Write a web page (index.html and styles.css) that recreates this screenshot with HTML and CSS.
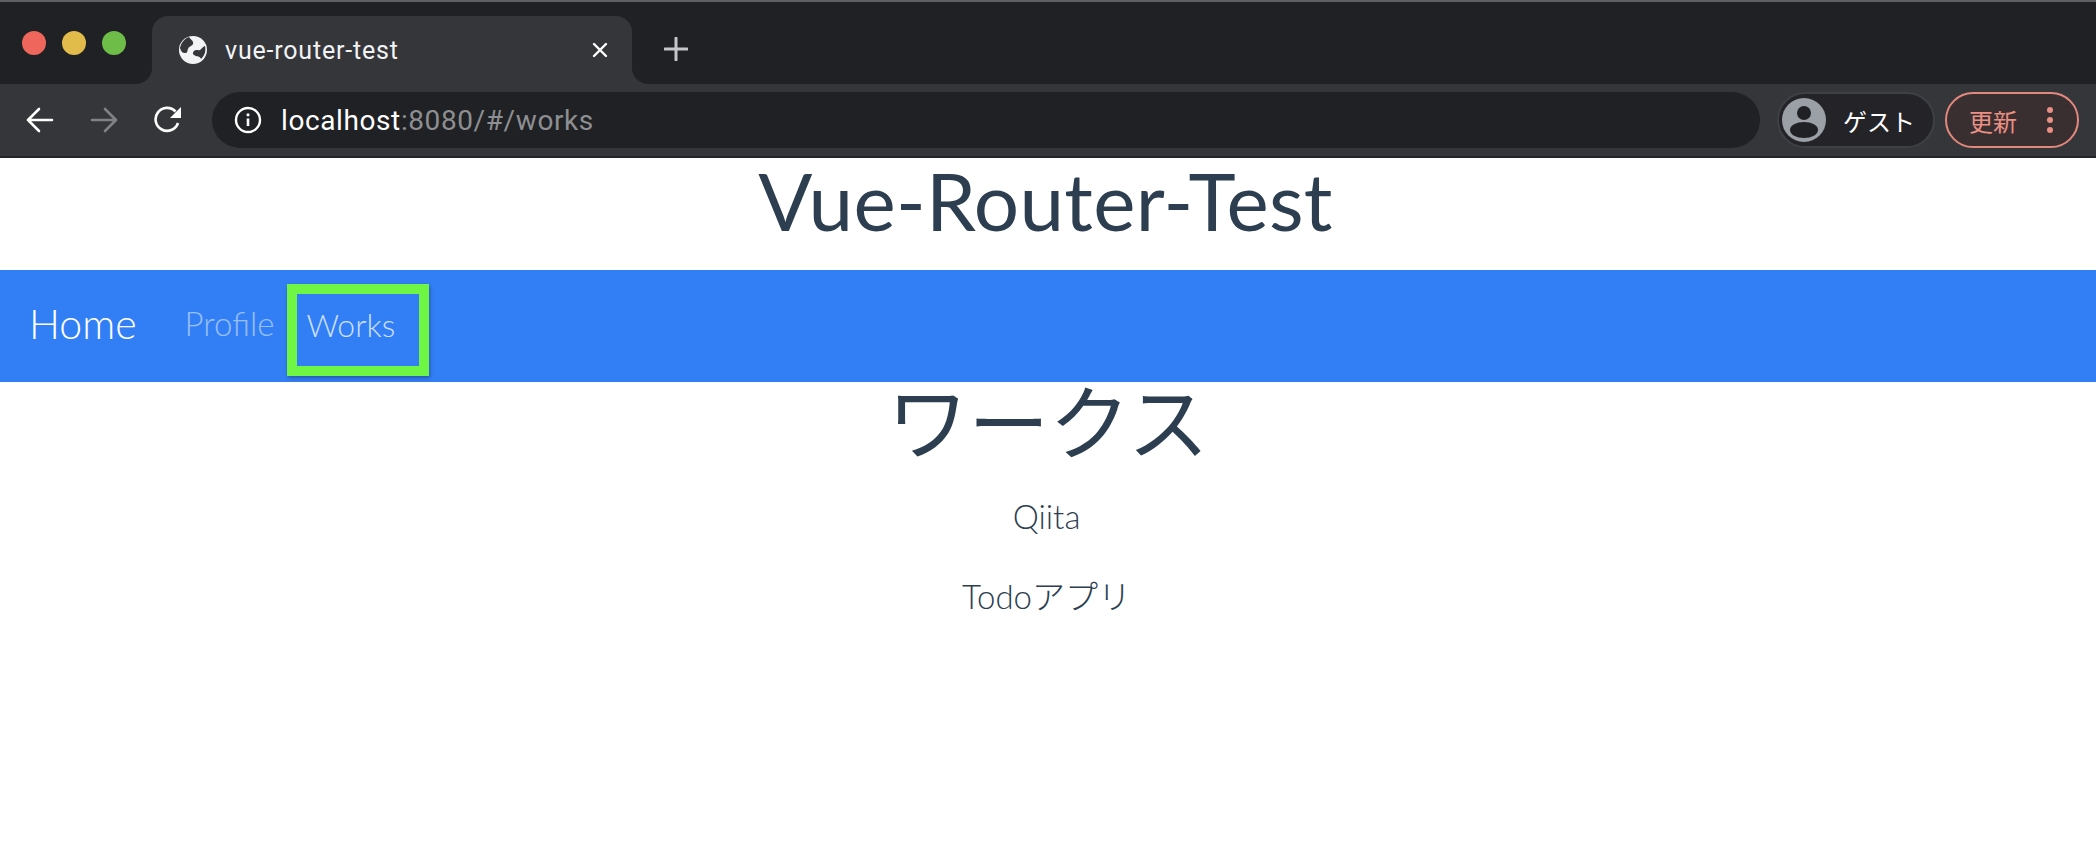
FILE: index.html
```html
<!DOCTYPE html>
<html lang="ja">
<head>
    <meta charset="UTF-8">
    <title>vue-router-test</title>
    <link rel="stylesheet" href="styles.css">
</head>
<body>

    <div class="browser">
        <div class="tabstrip">
            <div class="lights">
                <span class="light red"></span>
                <span class="light yellow"></span>
                <span class="light green"></span>
            </div>
            <div class="tab">
                <svg class="favicon" width="30" height="30" viewBox="0 0 30 30">
                    <circle cx="15" cy="15" r="14" fill="#f1f3f4"/>
                    <path d="M11 2 C13 5 16 6 15 9 C14 11 11 11 10 14 C9 16 10 18 7 18 C4 18 3 16 2 13 C3 8 6 4 11 2Z" fill="#35363a"/>
                    <path d="M16 16 C18 14 20 16 22 15 C24 14 24 12 27 11 C28 16 27 20 23 24 C22 21 20 22 18 21 C15 20 14 18 16 16Z" fill="#35363a"/>
                </svg>
                <span class="tab-title">vue-router-test</span>
                <svg class="tab-close" width="16" height="16" viewBox="0 0 16 16">
                    <path d="M2 2 L14 14 M14 2 L2 14" stroke="#fff" stroke-width="2.4" stroke-linecap="round"/>
                </svg>
            </div>
            <div class="tab-rest">
                <svg width="24" height="24" viewBox="0 0 24 24">
                    <path d="M12 1 V23 M1 12 H23" stroke="#c4c7c9" stroke-width="3" stroke-linecap="round"/>
                </svg>
            </div>
        </div>
        <div class="toolbar">
            <svg class="nav-icon" width="28" height="28" viewBox="0 0 28 28">
                <path d="M26 14 H2 M13 3 L2 14 L13 25" fill="none" stroke="#fff" stroke-width="2.6" stroke-linecap="round" stroke-linejoin="round"/>
            </svg>
            <svg class="nav-icon" width="28" height="28" viewBox="0 0 28 28">
                <path d="M2 14 H26 M15 3 L26 14 L15 25" fill="none" stroke="#808285" stroke-width="2.6" stroke-linecap="round" stroke-linejoin="round"/>
            </svg>
            <svg class="nav-icon" width="28" height="28" viewBox="0 0 28 28">
                <path d="M24 17 A11.5 11.5 0 1 1 21.5 5.5" fill="none" stroke="#fff" stroke-width="2.6"/>
                <path d="M27 1 V12 H16Z" fill="#fff"/>
            </svg>
            <div class="omnibox">
                <svg width="28" height="28" viewBox="0 0 28 28">
                    <circle cx="14" cy="14" r="12" fill="none" stroke="#fff" stroke-width="2.4"/>
                    <path d="M14 12.5 V20" stroke="#fff" stroke-width="2.6"/>
                    <circle cx="14" cy="8.8" r="1.6" fill="#fff"/>
                </svg>
                <span class="url"><span class="host">localhost</span>:8080/#/works</span>
            </div>
            <div class="guest">
                <svg width="44" height="44" viewBox="0 0 44 44">
                    <circle cx="22" cy="22" r="22" fill="#9aa0a6"/>
                    <circle cx="22" cy="15" r="7" fill="#202124"/>
                    <ellipse cx="22" cy="32" rx="14" ry="8" fill="#202124"/>
                </svg>
                <span>ゲスト</span>
            </div>
            <div class="update">
                <span>更新</span>
                <span class="dots"><i></i><i></i><i></i></span>
            </div>
        </div>
    </div>

    <div class="app">
        <h1>Vue-Router-Test</h1>
        <nav class="navbar">
            <a class="brand">Home</a>
            <a class="link">Profile</a>
            <a class="link active">Works</a>
        </nav>
        <h2>ワークス</h2>
        <p>Qiita</p>
        <p>Todoアプリ</p>
    </div>

</body>
</html>
```

FILE: styles.css
```css
body {
    margin: 0;
    height: 850px;
    overflow: hidden;
    background: #fff;
    font-family: 'Lato', 'Noto Sans CJK JP', sans-serif;
    color: #2c3e50;
}

/* browser frame */
.browser {
    font-family: 'Roboto', 'Noto Sans CJK JP', sans-serif;
    border-top: 2px solid #5f6063;
    border-bottom: 2px solid #232427;
}
.tabstrip {
    display: flex;
    height: 82px;
    background: linear-gradient(#202124 50%, #35363a 50%);
}
.lights {
    width: 152px;
    display: flex;
    gap: 16px;
    padding: 29px 0 0 22px;
    box-sizing: border-box;
    background: #202124;
    border-bottom-right-radius: 16px;
}
.light {
    width: 24px;
    height: 24px;
    border-radius: 50%;
}
.red { background: #ef675c; }
.yellow { background: #e2bc4b; }
.green { background: #6fbd49; }
.tab {
    width: 480px;
    margin-top: 14px;
    display: flex;
    align-items: center;
    padding: 0 24px 0 26px;
    box-sizing: border-box;
    background: #35363a;
    border-radius: 16px 16px 0 0;
}
.tab-title {
    flex: 1;
    margin-left: 17px;
    font-size: 25px;
    letter-spacing: .8px;
    color: #f1f3f4;
}
.tab-rest {
    flex: 1;
    display: flex;
    align-items: center;
    padding: 0 0 0 32px;
    background: #202124;
    border-bottom-left-radius: 16px;
}
.tab-rest svg {
    margin-top: 12px;
}
.toolbar {
    height: 72px;
    display: flex;
    align-items: center;
    padding-left: 26px;
    background: #35363a;
}
.nav-icon {
    margin-right: 36px;
}
.omnibox {
    width: 1548px;
    height: 56px;
    margin-left: -6px;
    display: flex;
    align-items: center;
    padding-left: 22px;
    box-sizing: border-box;
    background: #202124;
    border-radius: 28px;
}
.url {
    margin-left: 19px;
    font-size: 28px;
    letter-spacing: .6px;
    color: #8d8f92;
}
.host {
    color: #fff;
}
.guest {
    width: 158px;
    height: 56px;
    margin-left: 17px;
    display: flex;
    align-items: center;
    gap: 17px;
    padding-left: 2px;
    box-sizing: border-box;
    background: #242428;
    border: 2px solid #3f4045;
    border-radius: 28px;
    font-size: 24px;
    color: #fff;
}
.guest svg {
    margin-left: 1px;
}
.update {
    width: 134px;
    height: 56px;
    margin-left: 10px;
    display: flex;
    align-items: center;
    justify-content: space-between;
    padding: 0 24px 0 22px;
    box-sizing: border-box;
    background: #3a2f30;
    border: 2px solid #e3887d;
    border-radius: 28px;
    font-size: 24px;
    color: #ea8f84;
}
.dots {
    display: flex;
    flex-direction: column;
    gap: 4px;
}
.dots i {
    width: 6px;
    height: 6px;
    border-radius: 50%;
    background: #ea8f84;
}

/* page */
.app {
    text-align: center;
}
h1 {
    margin: 0;
    height: 112px;
    padding-right: 5px;
    font-size: 80px;
    font-weight: 400;
    letter-spacing: .3px;
    line-height: 85px;
}
.navbar {
    height: 112px;
    display: flex;
    align-items: center;
    padding: 0 0 6px 29px;
    box-sizing: border-box;
    background: #327ff5;
}
.brand {
    margin-right: 48px;
    font-size: 41px;
    font-weight: 300;
    color: #fff;
}
.link {
    font-size: 33px;
    font-weight: 300;
    color: rgba(255, 255, 255, .5);
}
.link.active {
    margin: 14px 0 0 13px;
    width: 113px;
    height: 72px;
    line-height: 62px;
    padding-left: 9px;
    text-align: left;
    border: 10px solid #6ff644;
    font-size: 32px;
    color: rgba(255, 255, 255, .75);
    box-shadow: 1px 2px 4px rgba(0, 0, 0, .3);
}
h2 {
    margin: 0 0 14px;
    font-size: 81px;
    font-weight: 400;
    line-height: 80px;
}
p {
    margin: 0;
    padding-right: 3px;
    font-size: 33px;
    font-weight: 300;
    line-height: 80px;
}
```
